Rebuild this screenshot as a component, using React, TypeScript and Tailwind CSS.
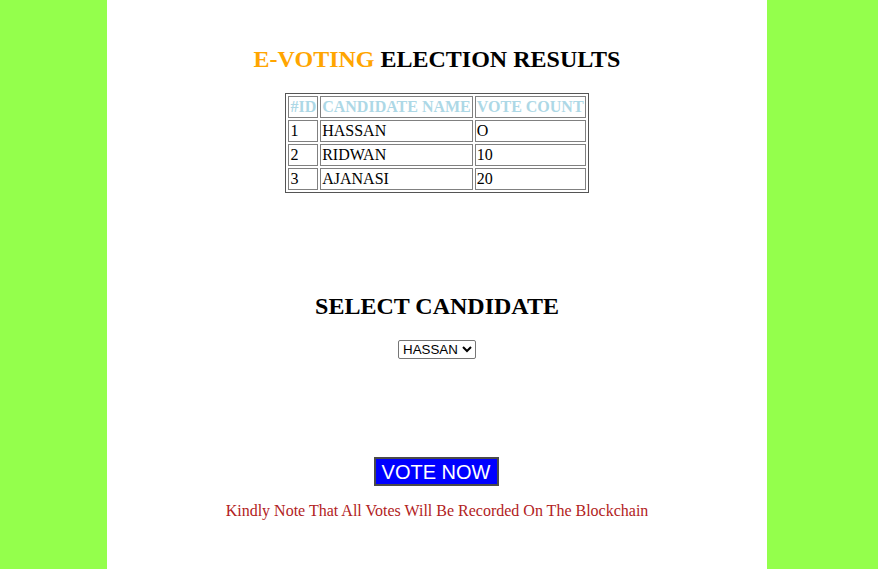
const candidates = [
  { id: 1, name: 'HASSAN', votes: 'O' },
  { id: 2, name: 'RIDWAN', votes: '10' },
  { id: 3, name: 'AJANASI', votes: '20' },
];

export default function App() {
  const cell = 'border border-[#808080] p-px text-left';
  return (
    <div className="min-h-[569px] w-full bg-[#94ff4c]">
      <div className="ml-[107px] flex min-h-[569px] w-[660px] flex-col items-center bg-white font-['Liberation_Serif',serif] text-black">
        <h2 className="mt-[45px] text-[24px] font-bold leading-[28px]">
          <span className="text-[#ffa500]">E-VOTING</span> ELECTION RESULTS
        </h2>

        <table className="mt-[20px] border-separate border-spacing-[2px] border border-[#555] text-[16px] leading-[18px]">
          <thead>
            <tr className="font-bold text-[#add8e6]">
              <th className={cell}>#ID</th>
              <th className={cell}>CANDIDATE NAME</th>
              <th className={cell}>VOTE COUNT</th>
            </tr>
          </thead>
          <tbody>
            {candidates.map((c) => (
              <tr key={c.id}>
                <td className={cell}>{c.id}</td>
                <td className={cell}>{c.name}</td>
                <td className={cell}>{c.votes}</td>
              </tr>
            ))}
          </tbody>
        </table>

        <h2 className="mt-[99px] text-[24px] font-bold leading-[28px]">SELECT CANDIDATE</h2>

        <select className="mt-[20px] h-[19px] rounded-[2px] border border-[#767676] bg-white font-['Liberation_Sans',sans-serif] text-[13.33px]" defaultValue="HASSAN">
          {candidates.map((c) => (
            <option key={c.id}>{c.name}</option>
          ))}
        </select>

        <button className="mr-[2px] mt-[98px] h-[29px] w-[125px] border-2 border-[#4a4a4a] bg-[#0000ff] font-['Liberation_Sans',sans-serif] text-[20px] leading-none text-white">
          VOTE NOW
        </button>

        <p className="mt-[16px] text-[16px] leading-[18px] text-[#b22222]">
          Kindly Note That All Votes Will Be Recorded On The Blockchain
        </p>
      </div>
    </div>
  );
}
